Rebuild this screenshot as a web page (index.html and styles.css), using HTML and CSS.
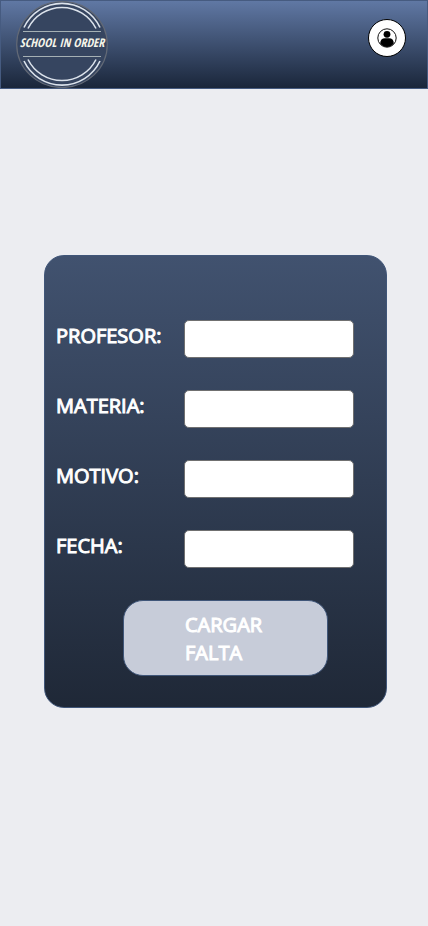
FILE: index.html
```html
<!DOCTYPE html>
<html lang="es">
<head>
<meta charset="utf-8">
<meta name="viewport" content="width=device-width, initial-scale=1">
<title>School in Order</title>
<link rel="stylesheet" href="styles.css">
</head>
<body>
<header class="topbar">
  <a class="logo" href="#" aria-label="School in Order">
    <svg viewBox="0 0 92 87" width="92" height="87">
      <ellipse cx="46" cy="43.500" rx="45.300" ry="43" fill="#364560" stroke="#626976" stroke-width="1.200"/>
      <g fill="none" stroke="#dce3ec" stroke-width="1.600">
        <path d="M8 26.500A42 42 0 0 1 84 26.500M12 27.500A38 38 0 0 1 80 27.500"/>
        <path d="M8 60A42 42 0 0 0 84 60M12 58.500A38 38 0 0 0 80 58.500"/>
      </g>
      <path d="M7 30.500H85M7 55.500H85" stroke="#a5b0b4" stroke-width="1"/>
      <text class="logo-text" x="46" y="46" text-anchor="middle">SCHOOL IN ORDER</text>
    </svg>
  </a>
  <button class="profile" type="button" aria-label="Perfil">
    <svg viewBox="0 0 20 20" width="20" height="20">
      <circle cx="10" cy="10" r="9.200" fill="#fff" stroke="#111" stroke-width="1"/>
      <circle cx="10" cy="6.300" r="3.400"/>
      <path d="M3.200 15.500C3.200 12 5 10.300 8 10.300H12C15 10.300 16.800 12 16.800 15.500C13.500 20 6.500 20 3.200 15.500Z"/>
    </svg>
  </button>
</header>
<main class="content">
  <form class="card">
    <div class="row"><label for="profesor">PROFESOR:</label><input id="profesor" type="text"></div>
    <div class="row"><label for="materia">MATERIA:</label><input id="materia" type="text"></div>
    <div class="row"><label for="motivo">MOTIVO:</label><input id="motivo" type="text"></div>
    <div class="row"><label for="fecha">FECHA:</label><input id="fecha" type="text"></div>
    <button class="submit" type="button"><span>CARGAR<br>FALTA</span></button>
  </form>
</main>
</body>
</html>
```
FILE: styles.css
```css
* {
  box-sizing: border-box;
}

body {
  margin: 0;
  min-height: 100vh;
  background: #ecedf1;
  color: #fff;
  font-family: "Open Sans", "Noto Sans", sans-serif;
}

.topbar {
  display: flex;
  justify-content: space-between;
  align-items: flex-start;
  height: 89px;
  padding: 0 21px 0 15px;
  border: 1px solid #465b80;
  background: linear-gradient(#6078a4, #1a263a);
}

.logo svg,
.profile svg {
  display: block;
}

.logo-text {
  fill: #f4f4e8;
  font: italic bold 12px "Open Sans Condensed", "Liberation Sans Narrow", "Roboto Condensed", sans-serif;
}

.profile {
  display: grid;
  place-items: center;
  width: 38px;
  height: 38px;
  margin-top: 18px;
  padding: 0;
  border: 1px solid #000;
  border-radius: 50%;
  background: #fff;
}

.content {
  padding: 166px 41px 40px 44px;
}

.card {
  display: flex;
  flex-direction: column;
  gap: 32px;
  padding: 64px 32px 31px 11px;
  border: 1px solid #405679;
  border-radius: 20px;
  background: linear-gradient(#41526f, #1f2837);
}

.row {
  display: grid;
  grid-template-columns: 128px 1fr;
  align-items: start;
}

.row label,
.submit {
  font-size: 20px;
  font-weight: 400;
  -webkit-text-stroke: 1px #fff;
}

.row label {
  line-height: 32px;
}

.row input {
  width: 100%;
  height: 38px;
  padding: 0 8px;
  border: 1px solid #707070;
  border-radius: 5px;
  background: #fff;
  font: inherit;
}

.submit {
  display: grid;
  justify-content: start;
  align-content: center;
  height: 76px;
  margin: 0 26px 0 67px;
  padding: 2px 0 0 61px;
  border: 1px solid #405679;
  border-radius: 20px;
  background: #c7ccd9;
  color: #fff;
  font-family: inherit;
  line-height: 28px;
  text-align: left;
}
```
